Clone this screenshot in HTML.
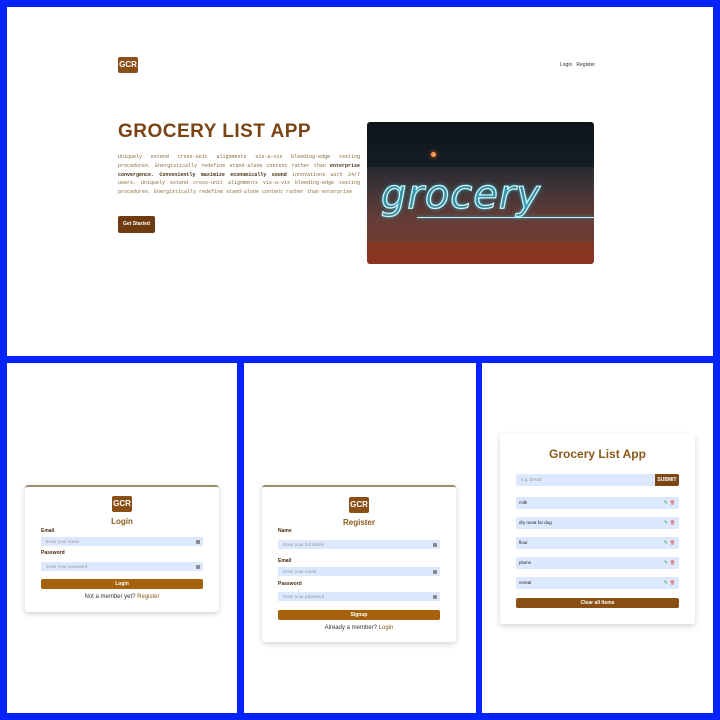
<!DOCTYPE html>
<html><head><meta charset="utf-8"><style>
*{box-sizing:border-box;margin:0;padding:0}
body{width:720px;height:720px;background:#0524fb;position:relative;overflow:hidden;font-family:"Liberation Sans",sans-serif}
.p{position:absolute;background:#fff}
.a{position:absolute}
.logo{position:absolute;background:#8a4e17;color:#fff;font-weight:bold;font-size:8px;border-radius:2px;text-align:center;line-height:16px;width:20px;height:16px}
.card{position:absolute;background:#fff;border-top:2px solid #a48a6e;border-radius:3px;box-shadow:0 2px 6px rgba(0,0,0,.18)}
.lbl{position:absolute;font-size:5px;font-weight:bold;color:#4a2a0a}
.in{position:absolute;background:#dbe8fd;height:9px;font-size:4.5px;color:#999;line-height:9px;padding-left:5px}
.in.ic:after{content:"";position:absolute;right:3px;top:2.5px;width:4px;height:4px;background:#888;border-radius:1px}
.btn{position:absolute;background:#a5620a;color:#fff;font-size:5px;font-weight:bold;text-align:center;border-radius:2px}
.row{position:absolute;left:16px;width:163px;height:12px;background:#dbe8fd;border-radius:2px;font-size:4.5px;line-height:12px;padding-left:3px;color:#222}
.row i{position:absolute;right:4px;top:0;line-height:12px;font-style:normal;font-size:5px;color:#3a3}
.row i:after{content:"🗑";color:#e33;margin-left:2px;font-size:4px}
</style></head><body>
<div class="p" style="left:7px;top:7px;width:706px;height:349px">
 <div class="logo" style="left:111px;top:50px;height:16px;width:20px">GCR</div>
 <div class="a" style="left:553px;top:55px;font-size:5px;color:#333">Login &nbsp; Register</div>
 <div class="a" style="left:111px;top:114px;font-size:19px;font-weight:bold;color:#7a4414;letter-spacing:.5px">GROCERY LIST APP</div>
 <div class="a" style="left:111px;top:146px;width:242px;font-family:'Liberation Mono',monospace;font-size:5px;line-height:8.8px;color:#8a6a3a;text-align:justify">Uniquely extend cross-unit alignments vis-a-vis bleeding-edge testing procedures. Energistically redefine stand-alone content rather than <b style="color:#4a2a0a">enterprise convergence. Conveniently maximize economically sound</b> innovations with 24/7 users. Uniquely extend cross-unit alignments vis-a-vis bleeding-edge testing procedures. Energistically redefine stand-alone content rather than enterprise</div>
 <div class="a" style="left:111px;top:209px;width:37px;height:17px;background:#6e3c10;border-radius:2px;color:#fff;font-size:5px;font-weight:bold;line-height:17px;text-align:center">Get Started</div>
 <div class="a" style="left:360px;top:115px;width:227px;height:142px;border-radius:3px;overflow:hidden;background:linear-gradient(180deg,#0d141a 0%,#141d24 30%,#3a2a28 45%,#7a3a28 70%,#8a3420 100%)">
  <div class="a" style="left:0;top:45px;width:227px;height:75px;background:rgba(70,70,80,.35)"></div>
  <div class="a" style="left:64px;top:30px;width:5px;height:5px;border-radius:50%;background:#ff9a50;box-shadow:0 0 5px #ff7030"></div>
  <div class="a" style="left:14px;top:50px;font-family:'DejaVu Sans',sans-serif;font-size:40px;color:transparent;-webkit-text-stroke:1.3px #c8f6ff;text-shadow:0 0 4px #2cc9e6;font-style:italic;letter-spacing:1px">grocery</div>
  <div class="a" style="left:50px;top:95px;width:177px;height:1px;background:#bff4ff;box-shadow:0 0 3px #2cc9e6"></div>
 </div>
</div>
<div class="p" style="left:7px;top:363px;width:230px;height:350px">
 <div class="card" style="left:18px;top:122px;width:194px;height:127px">
  <div class="logo" style="left:87px;top:9px">GCR</div>
  <div class="a" style="left:0;width:194px;top:30px;text-align:center;font-size:8px;font-weight:bold;color:#8a5a1a">Login</div>
  <div class="lbl" style="left:16px;top:41px">Email</div>
  <div class="in ic" style="left:16px;top:50px;width:162px">Enter your email</div>
  <div class="lbl" style="left:16px;top:63px">Password</div>
  <div class="in ic" style="left:16px;top:75px;width:162px">Enter your password</div>
  <div class="btn" style="left:16px;top:92px;width:162px;height:10px;line-height:10px">Login</div>
  <div class="a" style="left:0;width:194px;top:107px;text-align:center;font-size:6px;color:#333">Not a member yet? <span style="color:#8a5a1a">Register</span></div>
 </div>
</div>
<div class="p" style="left:244px;top:363px;width:232px;height:350px">
 <div class="card" style="left:18px;top:122px;width:194px;height:157px">
  <div class="logo" style="left:87px;top:10px">GCR</div>
  <div class="a" style="left:0;width:194px;top:31px;text-align:center;font-size:8px;font-weight:bold;color:#8a5a1a">Register</div>
  <div class="lbl" style="left:16px;top:41px">Name</div>
  <div class="in ic" style="left:16px;top:53px;width:162px">Enter your full Name</div>
  <div class="lbl" style="left:16px;top:71px">Email</div>
  <div class="in ic" style="left:16px;top:80px;width:162px">Enter your email</div>
  <div class="lbl" style="left:16px;top:94px">Password</div>
  <div class="in ic" style="left:16px;top:105px;width:162px">Enter your password</div>
  <div class="btn" style="left:16px;top:123px;width:162px;height:10px;line-height:10px">Signup</div>
  <div class="a" style="left:0;width:194px;top:138px;text-align:center;font-size:6px;color:#333">Already a member? <span style="color:#8a5a1a">Login</span></div>
 </div>
</div>
<div class="p" style="left:482px;top:363px;width:231px;height:350px">
 <div class="card" style="left:18px;top:71px;width:195px;height:190px;border-top:none">
  <div class="a" style="left:0;width:195px;top:13px;text-align:center;font-size:12px;font-weight:bold;color:#8a5a1a">Grocery List App</div>
  <div class="in" style="left:16px;top:40px;width:141px;height:12px;line-height:12px;border-radius:2px 0 0 2px">e.g. bread</div>
  <div class="a" style="left:155px;top:40px;width:24px;height:12px;background:#7a4614;color:#fff;font-size:5px;font-weight:bold;text-align:center;line-height:12px;border-radius:0 2px 2px 0">SUBMIT</div>
  <div class="row" style="top:63px">milk<i>✎</i></div>
  <div class="row" style="top:83px">dry meat for dog<i>✎</i></div>
  <div class="row" style="top:103px">flour<i>✎</i></div>
  <div class="row" style="top:123px">plums<i>✎</i></div>
  <div class="row" style="top:143px">cereal<i>✎</i></div>
  <div class="a" style="left:16px;top:164px;width:163px;height:10px;background:#8a4f12;border-radius:2px;color:#fff;font-size:5px;font-weight:bold;text-align:center;line-height:10px">Clear all Items</div>
 </div>
</div>
</body></html>
